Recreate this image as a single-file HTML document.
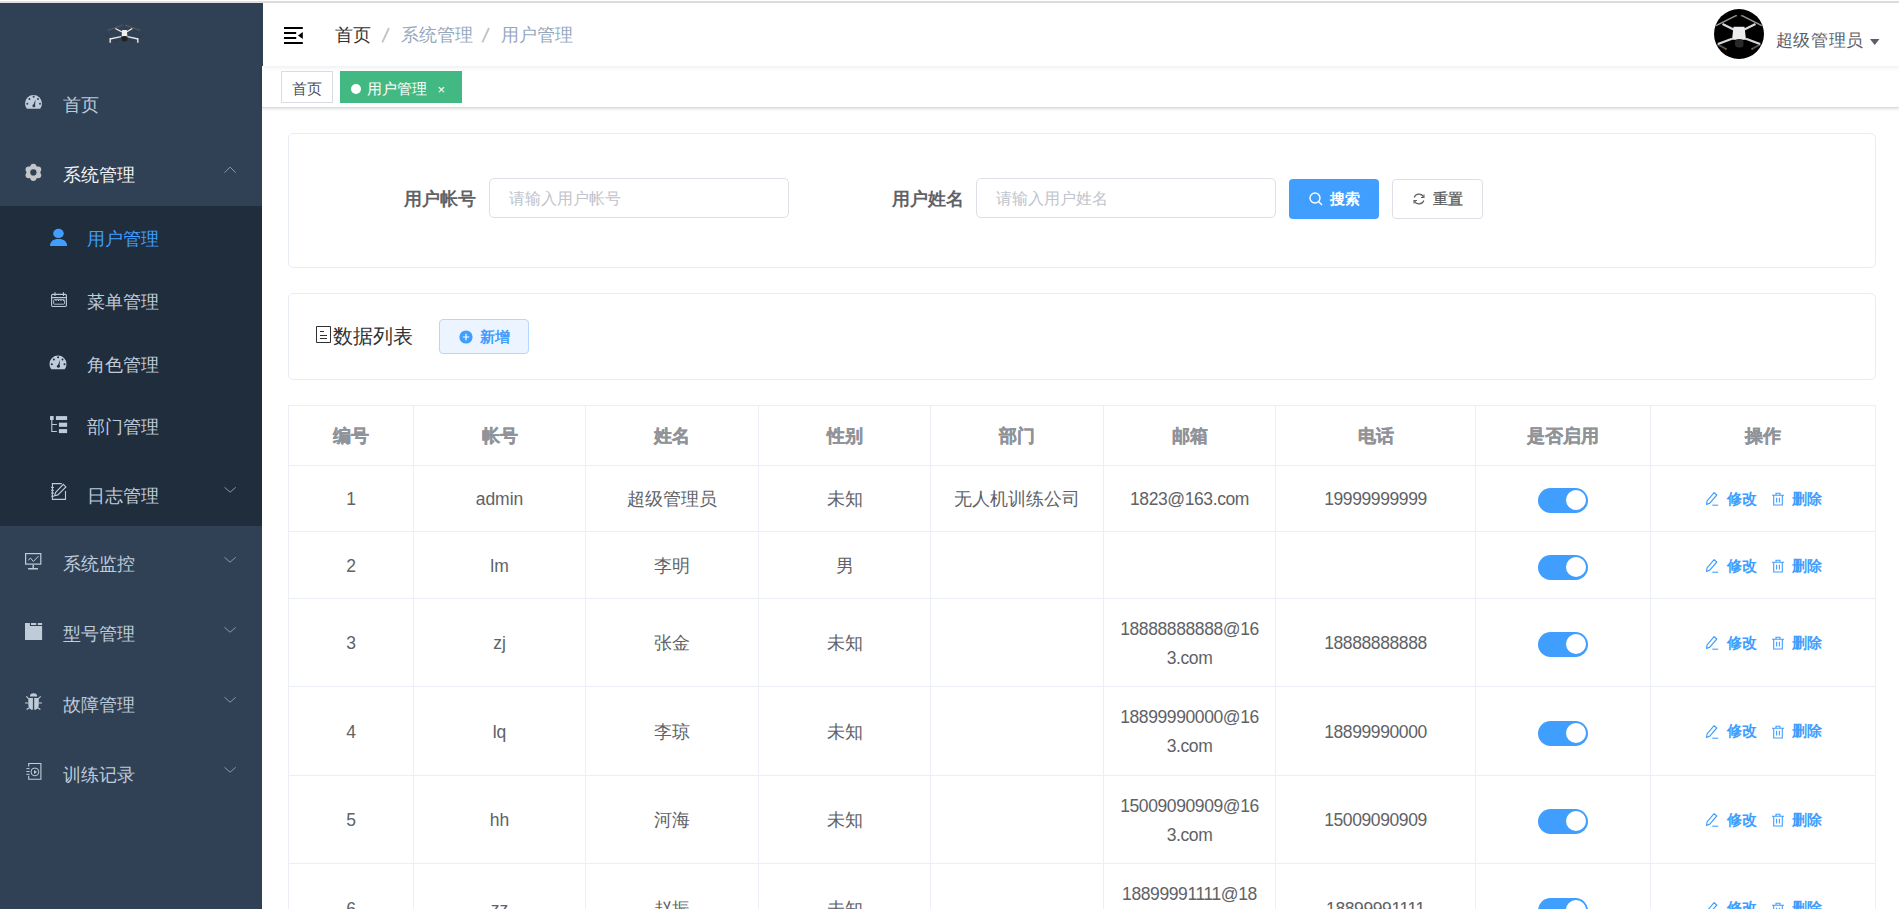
<!DOCTYPE html>
<html><head><meta charset="utf-8">
<style>
*{box-sizing:border-box;margin:0;padding:0}
html,body{width:1899px;height:909px;overflow:hidden;background:#fff;font-family:"Liberation Sans",sans-serif;position:relative}
.a{position:absolute;white-space:nowrap}
#topline{position:absolute;left:0;top:1px;width:1899px;height:2px;background:#dfe1de}
#side{position:absolute;left:0;top:3px;width:262px;height:906px;background:#304156}
#sub{position:absolute;left:0;top:206px;width:262px;height:320px;background:#1f2d3d}
.mi{position:absolute;font-size:17.5px;color:#bfcbd9;white-space:nowrap;line-height:20px}
svg{position:absolute;overflow:visible}
#nav{position:absolute;left:263px;top:3px;width:1636px;height:63px;background:#fff;box-shadow:0 1px 5px rgba(0,21,41,.09)}
#tags{position:absolute;left:262px;top:66px;width:1637px;height:42px;background:#fff;border-bottom:1px solid #d8dce5;box-shadow:0 1px 3px 0 rgba(0,0,0,.12),0 0 3px 0 rgba(0,0,0,.04)}
.panel{position:absolute;border:1px solid #e8ecf4;border-radius:5px;background:#fff}
.lbl{position:absolute;font-size:17.5px;font-weight:bold;color:#606266;white-space:nowrap;line-height:20px}
.inp{position:absolute;border:1px solid #dcdfe6;border-radius:5px;background:#fff;font-size:16.25px;color:#c0c4cc;padding-left:19px;line-height:37px;white-space:nowrap}
.hl{position:absolute;height:1px;background:#ebeef5;left:288px;width:1588px}
.vl{position:absolute;width:1px;background:#ebeef5;top:405px;height:504px}
.th{position:absolute;font-size:17.5px;font-weight:bold;color:#909399;-webkit-text-stroke:0.35px #909399;text-align:center;line-height:20px;white-space:nowrap;top:426px}
.td{position:absolute;font-size:17.5px;color:#606266;text-align:center;line-height:29px;white-space:nowrap}
.sw{position:absolute;left:1538px;width:50px;height:25px;border-radius:13px;background:#409eff}
.sw::after{content:"";position:absolute;right:2px;top:2px;width:20.3px;height:20.3px;border-radius:50%;background:#fff}
.op{position:absolute;font-size:15px;color:#409eff;white-space:nowrap;line-height:20px;font-weight:bold}
</style></head><body>
<div id="topline"></div>
<div id="side"></div>
<div id="sub"></div>

<!-- logo drone -->
<svg style="left:95px;top:15px" width="60" height="35" viewBox="0 0 60 35">
  <g stroke="#7a6a55" stroke-width="0.9" fill="none" opacity="0.8">
    <line x1="12.7" y1="15.4" x2="27.7" y2="10"/><line x1="30" y1="10" x2="45.4" y2="15.4"/>
  </g>
  <g stroke="#3a3a3a" stroke-width="1.3" fill="none">
    <line x1="9.2" y1="20.4" x2="22.7" y2="26.6"/><line x1="35" y1="26.6" x2="48.9" y2="20.4"/>
  </g>
  <g stroke="#e8e8e8" stroke-width="1.4" fill="none">
    <line x1="20.4" y1="13.5" x2="27" y2="17"/><line x1="37.3" y1="13.5" x2="31.5" y2="17"/>
    <line x1="15" y1="24" x2="26" y2="21.6"/><line x1="32.5" y1="21.6" x2="43" y2="24"/>
    <line x1="15.2" y1="23" x2="15.2" y2="27.7"/><line x1="42.8" y1="23" x2="42.8" y2="27.7"/>
  </g>
  <path d="M27.2 15h4.6l0.6 6.5h-5.8z" fill="#f0f0f0"/>
  <rect x="26.5" y="21" width="6" height="5.5" rx="2.5" fill="#222"/>
</svg>

<!-- menu -->
<div class="mi" style="left:63px;top:95px">首页</div>
<div class="mi" style="left:63px;top:164.5px;color:#f4f4f5">系统管理</div>
<div class="mi" style="left:86.5px;top:229px;color:#409eff">用户管理</div>
<div class="mi" style="left:86.5px;top:292px">菜单管理</div>
<div class="mi" style="left:86.5px;top:354.5px">角色管理</div>
<div class="mi" style="left:86.5px;top:417px">部门管理</div>
<div class="mi" style="left:86.5px;top:485.5px">日志管理</div>
<div class="mi" style="left:63px;top:554px">系统监控</div>
<div class="mi" style="left:63px;top:624px">型号管理</div>
<div class="mi" style="left:63px;top:694.5px">故障管理</div>
<div class="mi" style="left:63px;top:765px">训练记录</div>
<svg style="left:0;top:0" width="262" height="909" viewBox="0 0 262 909">
<g transform="translate(25 95)">
  <path d="M1.8 13.8Q0 11.5 0 8.5A8.5 8.5 0 0 1 17 8.5Q17 11.5 15.2 13.8z" fill="#bfcbd9"/>
  <path d="M8 10.8L10.6 4.2L9.9 11.2z" fill="#304156"/>
  <circle cx="8.9" cy="10.8" r="1.5" fill="#304156"/>
  <circle cx="2.3" cy="8.8" r="1" fill="#304156"/><circle cx="4.4" cy="3.9" r="1" fill="#304156"/>
  <circle cx="8.6" cy="1.8" r="1" fill="#304156"/><circle cx="13" cy="3.9" r="1" fill="#304156"/><circle cx="15" cy="8.8" r="1" fill="#304156"/>
</g>
<g transform="translate(24.8 163.8) scale(1.01)">
  <g fill="#c4c6ca"><circle cx="8.5" cy="8.5" r="6.8"/>
  <circle cx="8.5" cy="3" r="3"/><circle cx="8.5" cy="14" r="3"/>
  <circle cx="3.75" cy="5.75" r="3"/><circle cx="13.25" cy="5.75" r="3"/>
  <circle cx="3.75" cy="11.25" r="3"/><circle cx="13.25" cy="11.25" r="3"/></g>
  <circle cx="8.5" cy="8.5" r="3.1" fill="#304156"/></g>
<ellipse cx="58.5" cy="233.4" rx="5.3" ry="4.6" fill="#409eff"/>
<path d="M50 246C50 241.5 53 238.9 58.5 238.9S67.1 241.5 67.1 246z" fill="#409eff"/>
<g stroke="#bfcbd9" stroke-width="1.1" fill="none">
 <rect x="51.6" y="294.4" width="14.8" height="12.1" rx="1.2"/>
 <path d="M51.6 297.6h14.8M55 292.3v3.6M63.5 292.3v3.6"/>
 <rect x="53.6" y="299.6" width="11" height="4.6" rx="1" stroke-width="0.9"/>
</g>
<path d="M55.5 300.5h1M58 300.5h1M60.5 300.5h1M63 300.5h1" stroke="#bfcbd9" stroke-width="1.2"/>
<g transform="translate(49.5 355.5)">
  <path d="M1.8 13.8Q0 11.5 0 8.5A8.5 8.5 0 0 1 17 8.5Q17 11.5 15.2 13.8z" fill="#bfcbd9"/>
  <path d="M8 10.8L10.6 4.2L9.9 11.2z" fill="#1f2d3d"/>
  <circle cx="8.9" cy="10.8" r="1.5" fill="#1f2d3d"/>
  <circle cx="2.3" cy="8.8" r="1" fill="#1f2d3d"/><circle cx="4.4" cy="3.9" r="1" fill="#1f2d3d"/>
  <circle cx="8.6" cy="1.8" r="1" fill="#1f2d3d"/><circle cx="13" cy="3.9" r="1" fill="#1f2d3d"/><circle cx="15" cy="8.8" r="1" fill="#1f2d3d"/>
</g>
<g fill="#bfcbd9"><rect x="50" y="416.1" width="3.7" height="3.9" rx="0.6"/>
 <rect x="55.9" y="416.1" width="11.2" height="3.9"/><rect x="58.9" y="422.7" width="8.2" height="4.1"/><rect x="58.9" y="429.1" width="8.2" height="4"/></g>
 <path d="M51.8 420v11.5h5.1M51.8 424.5h5.1" stroke="#bfcbd9" stroke-width="1.1" fill="none"/>
<g stroke="#bfcbd9" stroke-width="1.1" fill="none">
 <path d="M61.8 483.6H52.4v15.8h13.1v-8.4"/>
 <path d="M51 487.4h3M51 490.3h3M51 493.1h3M51 496.2h3" stroke-width="1"/>
 <path d="M63.3 484.3l2.6 2.6-8 8-3.3.9.9-3.3z"/>
</g>
<g stroke="#bfcbd9" stroke-width="1.2" fill="none">
 <rect x="25.6" y="553.6" width="15.2" height="10.5"/>
 <path d="M28.4 560.4l2-2.5 3 3.6 5.1-5.4" stroke-width="1"/>
 <path d="M33.2 564.7v3.8M28.1 568.8H38" stroke-width="1.4"/>
</g>
<path d="M25 623H29.9V626H42.1V640H25z" fill="#bfcbd9"/><path d="M31 623h5.2v2H31zM37.8 623h4.3v2h-4.3z" fill="#bfcbd9"/>
<g fill="#bfcbd9"><path d="M29.9 696.6a3.65 3.4 0 0 1 7.3 0z"/>
 <path d="M28.3 697.9h4.6v11.9h-1.5q-2.8-1-3.1-5z"/><path d="M34.2 697.9h4.6v6.9q-.3 4-3.1 5h-1.5z"/></g>
 <path d="M26.3 696.3l2.3 2.3M40.7 696.3l-2.3 2.3M25 703h3.3M42 703h-3.3M26.6 709.6l3-2.1M40.4 709.6l-3-2.1" stroke="#bfcbd9" stroke-width="1.2"/>
<g stroke="#bfcbd9" stroke-width="1.1" fill="none">
 <path d="M28.7 766.5v-3h12.2v15.8H28.7v-3.5"/>
 <path d="M26.4 768.6h3.2M26.4 771.5h3.2M26.4 774.3h3.2" stroke-width="1"/>
 <circle cx="34.9" cy="771.9" r="3.9" stroke-width="1"/>
</g><path d="M34 769.9v4l3-2z" fill="#bfcbd9"/>
<path d="M224.5 172.7L230.1 167.1L235.7 172.7" stroke="#8e97a3" stroke-width="1" fill="none"/>
<path d="M224.5 487.3L230.1 492.2L235.7 487.3" stroke="#8e97a3" stroke-width="1" fill="none"/>
<path d="M224.5 557.3L230.1 562.1999999999999L235.7 557.3" stroke="#8e97a3" stroke-width="1" fill="none"/>
<path d="M224.5 627.3L230.1 632.1999999999999L235.7 627.3" stroke="#8e97a3" stroke-width="1" fill="none"/>
<path d="M224.5 697.3L230.1 702.1999999999999L235.7 697.3" stroke="#8e97a3" stroke-width="1" fill="none"/>
<path d="M224.5 767.3L230.1 772.1999999999999L235.7 767.3" stroke="#8e97a3" stroke-width="1" fill="none"/>
</svg>

<!-- navbar -->
<div id="tags"></div>
<div id="nav"></div><div class="a" style="left:262px;top:3px;width:1px;height:63px;background:#304156"></div>
<svg style="left:284px;top:26px" width="20" height="19" viewBox="0 0 20 19">
  <path d="M0 2h18.8M0 7h12.2M0 12h12.2M0 17h18.8" stroke="#000" stroke-width="2"/>
  <path d="M18.8 6l-4.8 3.5 4.8 3.5z" fill="#000"/>
</svg>
<div class="a" style="left:335px;top:24.5px;font-size:17.5px;line-height:20px;color:#303133">首页</div>
<svg style="left:378px;top:25px" width="14" height="20" viewBox="0 0 14 20"><path d="M4.3 17.3L11 3" stroke="#c0c4cc" stroke-width="1.9"/></svg>
<div class="a" style="left:401px;top:24.5px;font-size:17.5px;line-height:20px;color:#97a8be">系统管理</div>
<svg style="left:478px;top:25px" width="14" height="20" viewBox="0 0 14 20"><path d="M4.3 17.3L11 3" stroke="#c0c4cc" stroke-width="1.9"/></svg>
<div class="a" style="left:501px;top:24.5px;font-size:17.5px;line-height:20px;color:#97a8be">用户管理</div>

<!-- avatar -->
<svg style="left:1714px;top:9px" width="50" height="50" viewBox="0 0 50 50">
  <circle cx="25" cy="25" r="25" fill="#000"/>
  <g stroke="#9a9a9a" stroke-width="1.3" fill="none">
    <line x1="2" y1="16.7" x2="22" y2="6.7"/><line x1="28" y1="6.7" x2="47.8" y2="16.7"/>
  </g>
  <g stroke="#555" stroke-width="2" fill="none">
    <line x1="3" y1="35" x2="12" y2="40"/><line x1="38" y1="40" x2="47" y2="35"/>
  </g>
  <g stroke="#d8d8d8" stroke-width="2.2" fill="none">
    <line x1="8.5" y1="15" x2="20.6" y2="21"/><line x1="41.5" y1="15" x2="29.4" y2="21"/>
    <line x1="4" y1="35" x2="18" y2="29.8"/><line x1="32" y1="29.8" x2="46" y2="35"/>
  </g>
  <path d="M19.5 17.7h11l1.5 13h-14z" fill="#ececec"/>
  <rect x="21" y="30" width="8.5" height="8.5" rx="3.5" fill="#2a2a2a"/>
  <circle cx="12" cy="40" r="0.8" fill="#c87a30"/><circle cx="38" cy="40" r="0.8" fill="#c87a30"/>
  <circle cx="22.5" cy="6.7" r="0.7" fill="#c87a30"/><circle cx="27.5" cy="6.7" r="0.7" fill="#c87a30"/>
</svg>
<div class="a" style="left:1775.5px;top:31px;font-size:17px;letter-spacing:0.7px;line-height:20px;color:#5a5e66">超级管理员</div>
<svg style="left:1870px;top:39px" width="10" height="6" viewBox="0 0 10 6"><path d="M0 0h9.5L4.75 6z" fill="#5a5e66"/></svg>

<!-- tags -->
<div class="a" style="left:281px;top:71px;width:52px;height:32px;border:1px solid #d8dce5;background:#fff;font-size:15px;line-height:33px;color:#495060;text-align:center">首页</div>
<div class="a" style="left:340px;top:71px;width:122px;height:32px;background:#42b983;font-size:15px;line-height:32px;color:#fff">
  <span class="a" style="left:11px;top:12.5px;width:10px;height:10px;border-radius:50%;background:#fff"></span>
  <span class="a" style="left:27px;top:1.5px">用户管理</span>
  <span class="a" style="left:97.5px;top:3px;font-size:13px">×</span>
</div>

<!-- search panel -->
<div class="panel" style="left:288px;top:133px;width:1588px;height:135px"></div>
<div class="lbl" style="left:404px;top:189px">用户帐号</div>
<div class="inp" style="left:489px;top:178px;width:300px;height:40px;line-height:39px">请输入用户帐号</div>
<div class="lbl" style="left:891.5px;top:189px">用户姓名</div>
<div class="inp" style="left:976px;top:178px;width:300px;height:40px;line-height:39px">请输入用户姓名</div>
<div class="a" style="left:1289px;top:179px;width:90px;height:40px;background:#409eff;border-radius:4px"></div>
<svg style="left:1309px;top:192px" width="14" height="14" viewBox="0 0 14 14"><circle cx="6" cy="6" r="5" stroke="#fff" stroke-width="1.4" fill="none"/><path d="M9.5 9.5l3.5 3.5" stroke="#fff" stroke-width="1.4"/></svg>
<div class="a" style="left:1330px;top:189px;font-size:15px;line-height:20px;color:#fff;font-weight:bold">搜索</div>
<div class="a" style="left:1392px;top:179px;width:91px;height:40px;background:#fff;border:1px solid #dcdfe6;border-radius:4px"></div>
<svg style="left:1413px;top:193px" width="12" height="12" viewBox="0 0 12 12"><path d="M10.5 4A5 5 0 0 0 1.2 4.5M1.5 8a5 5 0 0 0 9.3-.5" stroke="#606266" stroke-width="1.2" fill="none"/><path d="M11 1.5v3H8M1 10.5v-3h3" stroke="#606266" stroke-width="1.1" fill="none"/></svg>
<div class="a" style="left:1433px;top:189px;font-size:15px;line-height:20px;color:#5a5c61;-webkit-text-stroke:0.35px #5a5c61">重置</div>

<!-- data list panel -->
<div class="panel" style="left:288px;top:293px;width:1588px;height:87px"></div>
<svg style="left:316px;top:326px" width="16" height="18" viewBox="0 0 16 18"><path d="M0.5 0.5h14v16h-14z" stroke="#303133" stroke-width="1" fill="none"/><path d="M4 5.5h4M4 9.5h7M4 12.5h7" stroke="#303133" stroke-width="1"/></svg>
<div class="a" style="left:333px;top:324.5px;font-size:20.2px;line-height:22px;color:#303133">数据列表</div>
<div class="a" style="left:439px;top:319px;width:90px;height:35px;background:#ecf5ff;border:1px solid #b3d8ff;border-radius:4px"></div>
<svg style="left:459px;top:329.5px" width="14" height="14" viewBox="0 0 14 14"><circle cx="7" cy="7" r="6.6" fill="#409eff"/><path d="M7 3.8v6.4M3.8 7h6.4" stroke="#fff" stroke-width="1.2"/></svg>
<div class="a" style="left:480px;top:326.5px;font-size:15px;line-height:20px;color:#409eff;font-weight:bold">新增</div>

<!-- table -->
<div class="hl" style="top:405px"></div>
<div class="hl" style="top:465px"></div>
<div class="hl" style="top:531px"></div>
<div class="hl" style="top:598px"></div>
<div class="hl" style="top:686px"></div>
<div class="hl" style="top:775px"></div>
<div class="hl" style="top:863px"></div>
<div class="vl" style="left:288px"></div>
<div class="vl" style="left:413px"></div>
<div class="vl" style="left:585px"></div>
<div class="vl" style="left:758px"></div>
<div class="vl" style="left:930px"></div>
<div class="vl" style="left:1103px"></div>
<div class="vl" style="left:1275px"></div>
<div class="vl" style="left:1475px"></div>
<div class="vl" style="left:1650px"></div>
<div class="vl" style="left:1875px"></div>
<div class="th" style="left:289px;width:124px">编号</div>
<div class="th" style="left:414px;width:171px">帐号</div>
<div class="th" style="left:586px;width:172px">姓名</div>
<div class="th" style="left:759px;width:171px">性别</div>
<div class="th" style="left:931px;width:172px">部门</div>
<div class="th" style="left:1104px;width:171px">邮箱</div>
<div class="th" style="left:1276px;width:199px">电话</div>
<div class="th" style="left:1476px;width:174px">是否启用</div>
<div class="th" style="left:1651px;width:224px">操作</div>
<div class="td" style="left:289px;width:124px;top:485.0px">1</div>
<div class="td" style="left:414px;width:171px;top:485.0px">admin</div>
<div class="td" style="left:586px;width:172px;top:485.0px">超级管理员</div>
<div class="td" style="left:759px;width:171px;top:485.0px">未知</div>
<div class="td" style="left:931px;width:172px;top:485.0px">无人机训练公司</div>
<div class="td" style="left:1104px;width:171px;top:485.0px;letter-spacing:-0.4px">1823@163.com</div>
<div class="td" style="left:1276px;width:199px;top:485.0px;letter-spacing:-0.4px">19999999999</div>
<div class="sw" style="top:488.0px"></div>
<svg style="left:1706px;top:492.0px" width="13" height="14" viewBox="0 0 13 14"><path d="M0.5 12.5L1.1 8.8L8.1 0.7L10.8 3L3.8 11.1z" stroke="#409eff" stroke-width="1.15" fill="none" stroke-linejoin="round"/><path d="M6.3 13.2h5.9" stroke="#409eff" stroke-width="1.1"/></svg>
<div class="op" style="left:1726.5px;top:488.5px">修改</div>
<svg style="left:1772px;top:492.0px" width="12" height="13" viewBox="0 0 12 13"><path d="M0 3.2h12M4 3.2V1.2h4v2M1.7 3.2v9.8h8.6V3.2M4.6 5.8v4.6M7.4 5.8v4.6" stroke="#409eff" stroke-width="1.1" fill="none"/></svg>
<div class="op" style="left:1792px;top:488.5px">删除</div>
<div class="td" style="left:289px;width:124px;top:552.0px">2</div>
<div class="td" style="left:414px;width:171px;top:552.0px">lm</div>
<div class="td" style="left:586px;width:172px;top:552.0px">李明</div>
<div class="td" style="left:759px;width:171px;top:552.0px">男</div>
<div class="sw" style="top:555.0px"></div>
<svg style="left:1706px;top:559.0px" width="13" height="14" viewBox="0 0 13 14"><path d="M0.5 12.5L1.1 8.8L8.1 0.7L10.8 3L3.8 11.1z" stroke="#409eff" stroke-width="1.15" fill="none" stroke-linejoin="round"/><path d="M6.3 13.2h5.9" stroke="#409eff" stroke-width="1.1"/></svg>
<div class="op" style="left:1726.5px;top:555.5px">修改</div>
<svg style="left:1772px;top:559.0px" width="12" height="13" viewBox="0 0 12 13"><path d="M0 3.2h12M4 3.2V1.2h4v2M1.7 3.2v9.8h8.6V3.2M4.6 5.8v4.6M7.4 5.8v4.6" stroke="#409eff" stroke-width="1.1" fill="none"/></svg>
<div class="op" style="left:1792px;top:555.5px">删除</div>
<div class="td" style="left:289px;width:124px;top:629.0px">3</div>
<div class="td" style="left:414px;width:171px;top:629.0px">zj</div>
<div class="td" style="left:586px;width:172px;top:629.0px">张金</div>
<div class="td" style="left:759px;width:171px;top:629.0px">未知</div>
<div class="td" style="left:1104px;width:171px;top:614.5px;letter-spacing:-0.4px">18888888888@16<br>3.com</div>
<div class="td" style="left:1276px;width:199px;top:629.0px;letter-spacing:-0.4px">18888888888</div>
<div class="sw" style="top:632.0px"></div>
<svg style="left:1706px;top:636.0px" width="13" height="14" viewBox="0 0 13 14"><path d="M0.5 12.5L1.1 8.8L8.1 0.7L10.8 3L3.8 11.1z" stroke="#409eff" stroke-width="1.15" fill="none" stroke-linejoin="round"/><path d="M6.3 13.2h5.9" stroke="#409eff" stroke-width="1.1"/></svg>
<div class="op" style="left:1726.5px;top:632.5px">修改</div>
<svg style="left:1772px;top:636.0px" width="12" height="13" viewBox="0 0 12 13"><path d="M0 3.2h12M4 3.2V1.2h4v2M1.7 3.2v9.8h8.6V3.2M4.6 5.8v4.6M7.4 5.8v4.6" stroke="#409eff" stroke-width="1.1" fill="none"/></svg>
<div class="op" style="left:1792px;top:632.5px">删除</div>
<div class="td" style="left:289px;width:124px;top:717.5px">4</div>
<div class="td" style="left:414px;width:171px;top:717.5px">lq</div>
<div class="td" style="left:586px;width:172px;top:717.5px">李琼</div>
<div class="td" style="left:759px;width:171px;top:717.5px">未知</div>
<div class="td" style="left:1104px;width:171px;top:703.0px;letter-spacing:-0.4px">18899990000@16<br>3.com</div>
<div class="td" style="left:1276px;width:199px;top:717.5px;letter-spacing:-0.4px">18899990000</div>
<div class="sw" style="top:720.5px"></div>
<svg style="left:1706px;top:724.5px" width="13" height="14" viewBox="0 0 13 14"><path d="M0.5 12.5L1.1 8.8L8.1 0.7L10.8 3L3.8 11.1z" stroke="#409eff" stroke-width="1.15" fill="none" stroke-linejoin="round"/><path d="M6.3 13.2h5.9" stroke="#409eff" stroke-width="1.1"/></svg>
<div class="op" style="left:1726.5px;top:721px">修改</div>
<svg style="left:1772px;top:724.5px" width="12" height="13" viewBox="0 0 12 13"><path d="M0 3.2h12M4 3.2V1.2h4v2M1.7 3.2v9.8h8.6V3.2M4.6 5.8v4.6M7.4 5.8v4.6" stroke="#409eff" stroke-width="1.1" fill="none"/></svg>
<div class="op" style="left:1792px;top:721px">删除</div>
<div class="td" style="left:289px;width:124px;top:806.0px">5</div>
<div class="td" style="left:414px;width:171px;top:806.0px">hh</div>
<div class="td" style="left:586px;width:172px;top:806.0px">河海</div>
<div class="td" style="left:759px;width:171px;top:806.0px">未知</div>
<div class="td" style="left:1104px;width:171px;top:791.5px;letter-spacing:-0.4px">15009090909@16<br>3.com</div>
<div class="td" style="left:1276px;width:199px;top:806.0px;letter-spacing:-0.4px">15009090909</div>
<div class="sw" style="top:809.0px"></div>
<svg style="left:1706px;top:813.0px" width="13" height="14" viewBox="0 0 13 14"><path d="M0.5 12.5L1.1 8.8L8.1 0.7L10.8 3L3.8 11.1z" stroke="#409eff" stroke-width="1.15" fill="none" stroke-linejoin="round"/><path d="M6.3 13.2h5.9" stroke="#409eff" stroke-width="1.1"/></svg>
<div class="op" style="left:1726.5px;top:809.5px">修改</div>
<svg style="left:1772px;top:813.0px" width="12" height="13" viewBox="0 0 12 13"><path d="M0 3.2h12M4 3.2V1.2h4v2M1.7 3.2v9.8h8.6V3.2M4.6 5.8v4.6M7.4 5.8v4.6" stroke="#409eff" stroke-width="1.1" fill="none"/></svg>
<div class="op" style="left:1792px;top:809.5px">删除</div>
<div class="td" style="left:289px;width:124px;top:894.5px">6</div>
<div class="td" style="left:414px;width:171px;top:894.5px">zz</div>
<div class="td" style="left:586px;width:172px;top:894.5px">赵振</div>
<div class="td" style="left:759px;width:171px;top:894.5px">未知</div>
<div class="td" style="left:1104px;width:171px;top:880.0px;letter-spacing:-0.4px">18899991111@18<br>3.com</div>
<div class="td" style="left:1276px;width:199px;top:894.5px;letter-spacing:-0.4px">18899991111</div>
<div class="sw" style="top:897.5px"></div>
<svg style="left:1706px;top:901.5px" width="13" height="14" viewBox="0 0 13 14"><path d="M0.5 12.5L1.1 8.8L8.1 0.7L10.8 3L3.8 11.1z" stroke="#409eff" stroke-width="1.15" fill="none" stroke-linejoin="round"/><path d="M6.3 13.2h5.9" stroke="#409eff" stroke-width="1.1"/></svg>
<div class="op" style="left:1726.5px;top:898px">修改</div>
<svg style="left:1772px;top:901.5px" width="12" height="13" viewBox="0 0 12 13"><path d="M0 3.2h12M4 3.2V1.2h4v2M1.7 3.2v9.8h8.6V3.2M4.6 5.8v4.6M7.4 5.8v4.6" stroke="#409eff" stroke-width="1.1" fill="none"/></svg>
<div class="op" style="left:1792px;top:898px">删除</div>
</body></html>
